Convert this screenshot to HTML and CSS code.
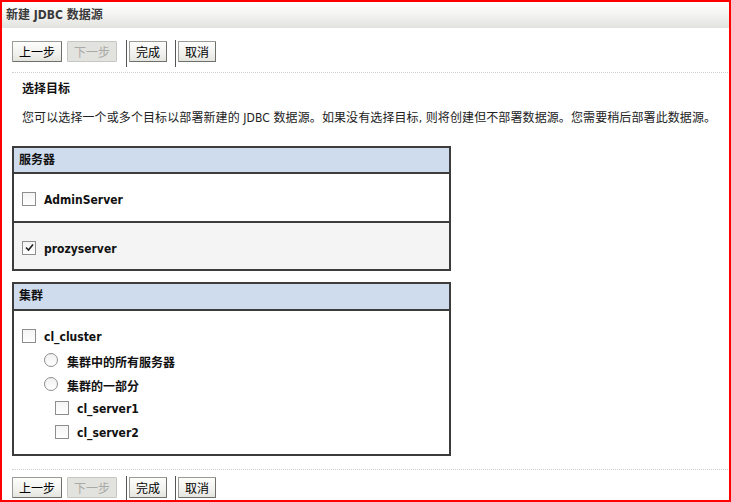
FILE: index.html
```html
<!DOCTYPE html>
<html lang="zh-CN">
<head>
  <meta charset="UTF-8" />
  <title>新建 JDBC 数据源</title>
  <link rel="stylesheet" href="styles.css">
</head>
<body>
  <div class="frame">
    <div class="titlebar">新建 JDBC 数据源</div>

    <div class="toolbar">
      <button class="btn">上一步</button>
      <button class="btn" disabled>下一步</button>
      <span class="sep"></span>
      <button class="btn">完成</button>
      <span class="sep"></span>
      <button class="btn">取消</button>
    </div>

    <h3 class="section-title">选择目标</h3>
    <p class="intro">您可以选择一个或多个目标以部署新建的 JDBC 数据源。如果没有选择目标, 则将创建但不部署数据源。您需要稍后部署此数据源。</p>

    <div class="target-box servers">
      <div class="box-head">服务器</div>
      <div class="box-row first">
        <div class="opt"><span class="check"></span>AdminServer</div>
      </div>
      <div class="box-row second alt">
        <div class="opt">
          <span class="check">
            <svg width="11" height="11" viewBox="0 0 11 11"><path d="M2 5.5 L4.5 8 L9 2.5" fill="none" stroke="#222" stroke-width="1.6"/></svg>
          </span>prozyserver
        </div>
      </div>
    </div>

    <div class="target-box clusters">
      <div class="box-head tall">集群</div>
      <div class="box-row cluster-row">
        <div class="opt"><span class="check"></span>cl_cluster</div>
        <div class="opt lvl1"><span class="radio"></span>集群中的所有服务器</div>
        <div class="opt lvl1"><span class="radio"></span>集群的一部分</div>
        <div class="opt lvl2"><span class="check"></span>cl_server1</div>
        <div class="opt lvl2"><span class="check"></span>cl_server2</div>
      </div>
    </div>

    <div class="toolbar bottom">
      <button class="btn">上一步</button>
      <button class="btn" disabled>下一步</button>
      <span class="sep"></span>
      <button class="btn">完成</button>
      <span class="sep"></span>
      <button class="btn">取消</button>
    </div>
  </div>
</body>
</html>
```

FILE: styles.css
```css
:root {
  --ink: #111;
  --frame: #ff0000;
  --box-border: #3c3c3c;
  --head-bg: #cfdcee;
  --row-alt: #f4f4f4;
  --dots: #cfcfcf;
}
* { box-sizing: border-box; }
body {
  margin: 0;
  background: #fff;
  color: var(--ink);
  font-family: "DejaVu Sans Condensed", "Noto Sans CJK SC", sans-serif;
  font-size: 12px;
}
.frame {
  width: 731px;
  height: 502px;
  border: 2px solid var(--frame);
  overflow: hidden;
}
.titlebar {
  height: 26px;
  line-height: 26px;
  padding-left: 4px;
  font-weight: bold;
  color: #3a3a3a;
  background: linear-gradient(to bottom, #ffffff 0%, #f6f6f5 40%, #e2e2de 100%);
}
.toolbar {
  display: flex;
  align-items: flex-start;
  margin: 0 1px 0 10px;
  padding: 12px 0 5px;
  height: 45px;
  border-bottom: 1px dotted var(--dots);
}
.toolbar.bottom {
  margin-top: 13px;
  padding: 6px 0 0;
  border-bottom: none;
  border-top: 1px dotted var(--dots);
}
.btn {
  margin-top: 1px;
  height: 21px;
  padding: 0 6px;
  font-family: "Noto Sans CJK SC", sans-serif;
  font-size: 12px;
  line-height: 19px;
  color: #000;
  background: linear-gradient(to bottom, #fdfdfc 0%, #f1f1ee 60%, #e4e4df 100%);
  border: 1px solid #9a9a96;
  border-right-color: #6e6e6a;
  border-bottom-color: #6e6e6a;
  border-radius: 1px;
}
.btn + .btn { margin-left: 5px; }
.btn[disabled] {
  color: #a9a9a5;
  background: #e2e2de;
  border-color: #c6c6c2;
}
.sep {
  width: 1px;
  height: 27px;
  margin: 0 2px 0 9px;
  background: #555;
}
.sep + .btn { margin-left: 0; }
.btn + .sep { margin-left: 9px; }
.sep ~ .btn + .sep { margin-left: 8px; }
.section-title {
  margin: 8px 0 0 20px;
  font-size: 12px;
  line-height: 16px;
  font-weight: bold;
}
.intro {
  margin: 13px 0 0 20px;
  line-height: 16px;
  letter-spacing: 0.1px;
  color: #222;
}
.target-box {
  width: 439px;
  margin: 20px 0 0 10px;
  border: 2px solid var(--box-border);
}
.target-box.clusters { margin-top: 11px; }
.box-head {
  height: 26px;
  line-height: 24px;
  padding-left: 5px;
  font-weight: bold;
  background: var(--head-bg);
  border-bottom: 2px solid var(--box-border);
}
.box-head.tall { height: 27px; line-height: 25px; }
.box-row {
  display: flex;
  align-items: center;
  padding-left: 8px;
}
.box-row.first { height: 47px; }
.box-row.second {
  height: 48px;
  border-top: 2px solid var(--box-border);
}
.box-row.alt { background: var(--row-alt); }
.cluster-row {
  flex-direction: column;
  align-items: stretch;
  padding: 14px 0 9px 8px;
}
.opt {
  display: flex;
  align-items: center;
  height: 24px;
  font-weight: bold;
  font-size: 12px;
}
.servers .opt { padding-top: 5px; }
.opt.lvl1 { padding-left: 22px; }
.opt.lvl2 { padding-left: 33px; }
.check {
  display: inline-flex;
  align-items: center;
  justify-content: center;
  width: 14px;
  height: 14px;
  margin: -2px 8px 0 0;
  border: 1px solid #8e8e8e;
  background: linear-gradient(to bottom, #f4f4f4, #ffffff);
}
.radio {
  display: inline-block;
  width: 14px;
  height: 14px;
  margin: -2px 9px 0 0;
  border: 1px solid #8e8e8e;
  border-radius: 50%;
  background: linear-gradient(to bottom, #f0f0f0, #ffffff);
}
```
